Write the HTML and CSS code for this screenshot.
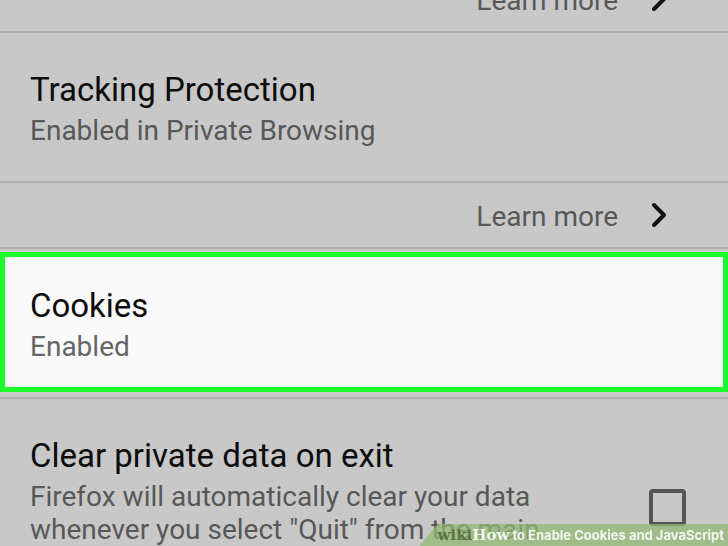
FILE: index.html
```html
<!DOCTYPE html>
<html lang="en">
<head>
    <meta charset="UTF-8">
    <meta name="viewport" content="width=device-width, initial-scale=1.0">
    <title>How to Enable Cookies and JavaScript</title>
    <link rel="stylesheet" href="styles.css">
</head>
<body>
    <main class="settings">
        <a class="learn-more" href="#">
            <span>Learn more</span>
            <svg class="chevron" viewBox="0 0 16 26" aria-hidden="true">
                <path d="M3 3 L13 13 L3 23"/>
            </svg>
        </a>

        <div class="row">
            <div class="row-text">
                <h2>Tracking Protection</h2>
                <p>Enabled in Private Browsing</p>
            </div>
        </div>

        <a class="learn-more" href="#">
            <span>Learn more</span>
            <svg class="chevron" viewBox="0 0 16 26" aria-hidden="true">
                <path d="M3 3 L13 13 L3 23"/>
            </svg>
        </a>

        <div class="row highlighted">
            <div class="row-text">
                <h2>Cookies</h2>
                <p>Enabled</p>
            </div>
        </div>

        <div class="row">
            <div class="row-text">
                <h2><label for="clearData">Clear private data on exit</label></h2>
                <p class="long">Firefox will automatically clear your data whenever you select "Quit" from the main</p>
            </div>
            <input type="checkbox" id="clearData">
        </div>
    </main>

    <footer class="caption">
        <span class="wiki">wiki</span><span class="how">How</span> to Enable Cookies and JavaScript
    </footer>
</body>
</html>
```
FILE: styles.css
```css
:root {
    --background: #c8c8c8;
    --divider: #adadad;
    --text: #0c0c0c;
    --muted: #585858;
    --highlight: #1dfa2b;
}

* {
    box-sizing: border-box;
}

body {
    font-family: Roboto, sans-serif;
    background: var(--background);
    color: var(--text);
    height: 100vh;
    margin: 0;
    overflow: hidden;
}

/* list is scrolled part way into the first row */
.settings {
    margin-top: -33px;
}

.learn-more {
    display: flex;
    align-items: center;
    justify-content: flex-end;
    gap: 33px;
    height: 66px;
    padding-right: 61px;
    border-bottom: 2px solid var(--divider);
    color: var(--muted);
    font-size: 28px;
    line-height: 33px;
    text-decoration: none;
}

.learn-more span {
    padding-top: 2px;
}

.chevron {
    width: 16px;
    height: 26px;
    fill: none;
    stroke: #111;
    stroke-width: 4;
    stroke-linecap: round;
    stroke-linejoin: round;
}

.row {
    display: flex;
    align-items: center;
    justify-content: space-between;
    padding: 37px 42px 34px 30px;
    border-bottom: 2px solid var(--divider);
}

.row-text {
    max-width: 540px;
}

.row h2 {
    margin: 0 0 4px;
    font-size: 33px;
    font-weight: 400;
    line-height: 40px;
}

.row p {
    margin: 0;
    color: var(--muted);
    font-size: 28px;
    line-height: 33px;
}

/* room for three lines */
.row .long {
    min-height: 99px;
}

.highlighted {
    padding: 3px 0 5px;
}

.highlighted .row-text {
    flex: 1;
    max-width: none;
    padding: 29px 25px 24px;
    border: 5px solid var(--highlight);
    background: #fafafa;
}

.highlighted p {
    color: #666;
}

input[type="checkbox"] {
    appearance: none;
    width: 37px;
    height: 37px;
    margin: 0;
    border: 4px solid #555;
    border-radius: 4px;
}

.caption {
    position: fixed;
    right: 0;
    bottom: 0;
    padding: 0 4px 0 18px;
    background: rgba(147, 184, 116, 0.75);
    clip-path: polygon(18px 0, 100% 0, 100% 100%, 0 100%);
    color: #f2f6ee;
    font-family: Inter, sans-serif;
    font-size: 13px;
    font-weight: 700;
    line-height: 22px;
}

.wiki,
.how {
    font-family: "DejaVu Serif", serif;
    font-size: 15px;
}

.wiki {
    color: #5c7449;
}
```
